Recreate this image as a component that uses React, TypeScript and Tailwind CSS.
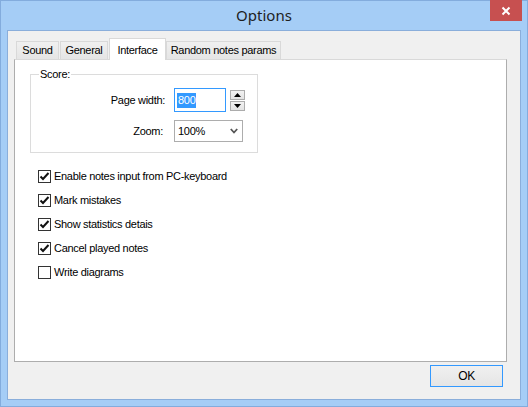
import { useState } from "react";

const ui = { fontFamily: '"Liberation Sans", Arial, sans-serif' };

function Check({ checked }: { checked: boolean }) {
  return (
    <span className="flex h-[13px] w-[13px] shrink-0 items-center justify-center border border-[#333333] bg-white">
      {checked && (
        <svg width="11" height="11" viewBox="0 0 11 11">
          <path d="M1.5 5.5 L4 8 L9.5 2" fill="none" stroke="#111" strokeWidth="2" />
        </svg>
      )}
    </span>
  );
}

const options = [
  { label: "Enable notes input from PC-keyboard", on: true },
  { label: "Mark mistakes", on: true },
  { label: "Show statistics detais", on: true },
  { label: "Cancel played notes", on: true },
  { label: "Write diagrams", on: false },
];

const tabs = [
  { name: "Sound", w: "w-[43px]" },
  { name: "General", w: "w-[48px]" },
  { name: "Interface", w: "w-[57px]" },
  { name: "Random notes params", w: "w-[115px]" },
];

export default function App() {
  const [active] = useState("Interface");

  return (
    <div
      className="flex h-[407px] w-[528px] flex-col border border-[#83acdd] bg-[#a5cdf6] px-[6px] pb-[6px] text-[11px] tracking-[-0.3px] text-black"
      style={ui}
    >
      {/* title bar */}
      <div className="relative flex h-[29px] shrink-0 items-center justify-center">
        <span
          className="text-[15px] tracking-normal text-[#1e1e1e]"
          style={{ fontFamily: '"Noto Sans", "Open Sans", sans-serif' }}
        >
          Options
        </span>
        <div className="absolute right-[-1px] top-[-1px] flex h-[21px] w-[32px] items-center justify-center bg-[#c75050]">
          <svg width="10" height="10" viewBox="0 0 10 10">
            <path d="M1.5 1.5 L8.5 8.5 M8.5 1.5 L1.5 8.5" stroke="#fff" strokeWidth="2" />
          </svg>
        </div>
      </div>

      {/* client area */}
      <div className="flex flex-1 flex-col border border-[#8aaedb] bg-[#f0f0f0] pl-[6px] pr-[13px] pt-[7px]">
        <div className="flex h-[21px] items-end pl-[2px]">
          {tabs.map((t) =>
            t.name === active ? (
              <div
                key={t.name}
                className={`relative z-10 -mb-px flex h-[22px] items-start justify-center border border-b-0 border-[#d9d9d9] bg-white pt-[3px] ${t.w}`}
              >
                {t.name}
              </div>
            ) : (
              <div
                key={t.name}
                className={`mr-px flex h-[18px] items-center justify-center border border-b-0 border-[#d9d9d9] bg-gradient-to-b from-[#f0f0f0] to-[#e5e5e5] ${t.w}`}
              >
                {t.name}
              </div>
            )
          )}
        </div>

        <div className="h-[303px] border border-[#adadad] border-t-[#d9d9d9] bg-white pl-[15px] pt-[14px]">
          <div className="relative h-[79px] w-[228px] border border-[#dcdcdc]">
            <span className="absolute left-[8px] top-[-8px] bg-white px-px leading-[14px]">Score:</span>
            <div className="mt-[13px] flex items-center">
              <span className="w-[143px] pr-[9px] text-right">Page width:</span>
              <div className="flex h-[24px] w-[52px] items-center border border-[#3399ff] bg-white pl-[2px]">
                <span className="bg-[#3399ff] px-px leading-[15px] text-white">800</span>
              </div>
              <div className="ml-[4px] flex flex-col gap-px">
                <div className="flex h-[10px] w-[15px] items-center justify-center border border-[#acacac] bg-gradient-to-b from-[#f2f2f2] to-[#e3e3e3]">
                  <svg width="7" height="4" viewBox="0 0 7 4">
                    <path d="M0 4 L3.5 0 L7 4 Z" fill="#000" />
                  </svg>
                </div>
                <div className="flex h-[10px] w-[15px] items-center justify-center border border-[#acacac] bg-gradient-to-b from-[#f2f2f2] to-[#e3e3e3]">
                  <svg width="7" height="4" viewBox="0 0 7 4">
                    <path d="M0 0 L7 0 L3.5 4 Z" fill="#000" />
                  </svg>
                </div>
              </div>
            </div>
            <div className="mt-[8px] flex items-center">
              <span className="w-[143px] pr-[11px] text-right">Zoom:</span>
              <div className="flex h-[22px] w-[69px] items-center justify-between border border-[#adadad] bg-white pl-[3px] pr-[4px]">
                <span>100%</span>
                <svg width="8" height="6" viewBox="0 0 8 6">
                  <path d="M0.8 1 L4 4.5 L7.2 1" fill="none" stroke="#555" strokeWidth="1.8" />
                </svg>
              </div>
            </div>
          </div>

          <div className="ml-[8px] mt-[16px] flex flex-col gap-[10px]">
            {options.map((o) => (
              <label key={o.label} className="flex h-[14px] items-center gap-[3px]">
                <Check checked={o.on} />
                <span>{o.label}</span>
              </label>
            ))}
          </div>
        </div>

        <div className="mt-[3px] flex justify-end pr-[4px]">
          <button
            type="button"
            className="flex h-[22px] w-[73px] items-center justify-center border border-[#3399ff] bg-gradient-to-b from-[#f0f0f0] to-[#e5e5e5] text-[12px]"
          >
            OK
          </button>
        </div>
      </div>
    </div>
  );
}
